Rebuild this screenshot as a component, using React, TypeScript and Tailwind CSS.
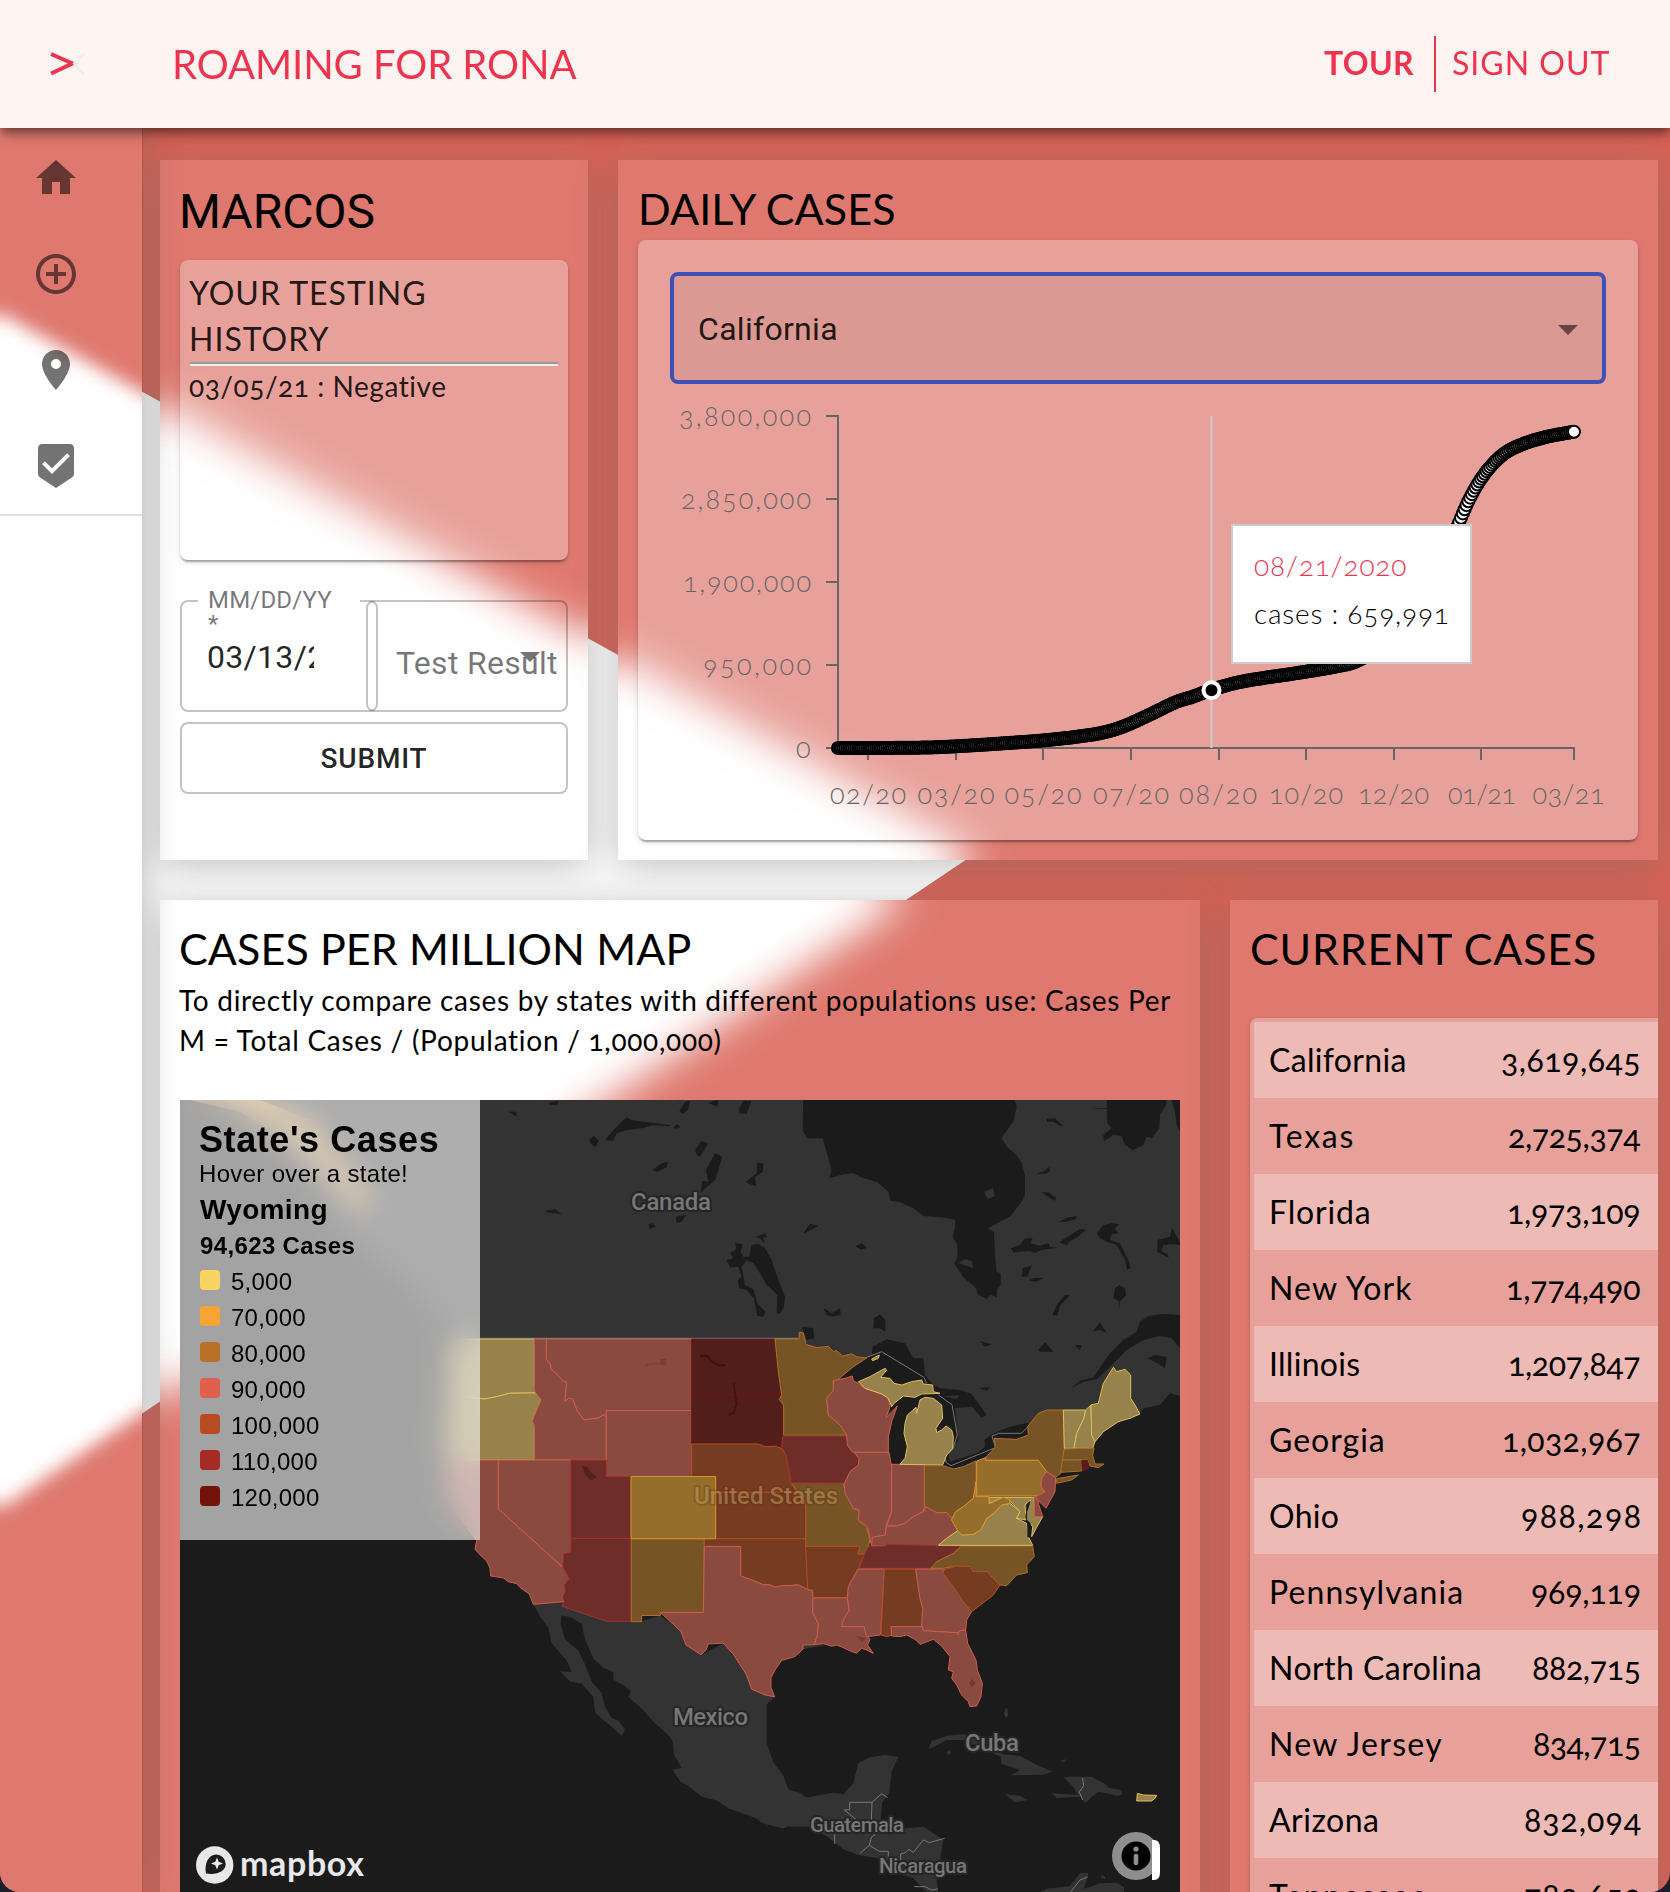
import { useLayoutEffect, useRef, useState, type ReactNode } from "react";
import { MdAddCircleOutline, MdArrowDropDown, MdBeenhere, MdHome, MdLocationOn } from "react-icons/md";

/* Text whose tracking is adjusted so that the line fills the given width. */
function Fit({ w, children, className = "" }: { w: number; children: string; className?: string }) {
  const ref = useRef<HTMLSpanElement>(null);
  const [spacing, setSpacing] = useState(0);
  useLayoutEffect(() => {
    if (ref.current && children.length > 1) {
      setSpacing((w - ref.current.offsetWidth) / (children.length - 1));
    }
  }, [w, children]);
  return (
    <span className={`block shrink-0 ${className}`} style={{ width: w }}>
      <span ref={ref} className="inline-block whitespace-pre" style={{ letterSpacing: spacing, marginRight: -spacing }}>
        {children}
      </span>
    </span>
  );
}

/* Frosted view of the page's white wedge, as seen through a translucent surface. */
function Frost({ id, box, wedge, blur }: { id: string; box: string; wedge: string; blur: number }) {
  return (
    <svg viewBox={box} className="absolute inset-0 -z-10 h-full w-full overflow-hidden" preserveAspectRatio="none">
      <defs>
        <filter id={id} filterUnits="userSpaceOnUse" x="-400" y="-100" width="2400" height="2300" colorInterpolationFilters="sRGB">
          <feGaussianBlur stdDeviation={blur} />
        </filter>
      </defs>
      <rect x="-400" y="-100" width="2400" height="2300" fill="#df796f" />
      <path d={wedge} fill="#fff" filter={`url(#${id})`} />
    </svg>
  );
}

function Panel({ className, frost, children }: { className: string; frost: ReactNode; children: ReactNode }) {
  return (
    <section className={`relative isolate p-5 shadow-[0_6px_36px_rgba(112,112,112,0.45)] ${className}`}>
      {frost}
      {children}
    </section>
  );
}

const paper =
  "rounded-lg bg-white/30 shadow-[0_4px_2px_-2px_rgba(0,0,0,0.2),0_2px_2px_rgba(0,0,0,0.14),0_2px_6px_rgba(0,0,0,0.12)]";

/* ---------- Daily cases chart ---------- */

const anchors: [number, number][] = [
  [838, 748], [868, 748], [928, 747.5], [956, 746.3], [1000, 743.6], [1043, 740.4], [1075, 737], [1101, 733],
  [1122, 727], [1149, 715], [1176, 702], [1192, 697], [1211, 690], [1240, 682], [1304, 672], [1336, 666.5],
  [1357, 661], [1400, 635], [1430, 592], [1458, 525], [1468, 502], [1479, 482], [1491, 466], [1505, 453],
  [1523, 444], [1546, 437], [1574, 431.7],
];

function curveAt(x: number) {
  let i = 0;
  while (i < anchors.length - 2 && anchors[i + 1][0] < x) i++;
  const slope = (k: number) => {
    const a = anchors[Math.max(0, k - 1)];
    const b = anchors[Math.min(anchors.length - 1, k + 1)];
    return (b[1] - a[1]) / (b[0] - a[0]);
  };
  const [x0, y0] = anchors[i];
  const [x1, y1] = anchors[i + 1];
  const h = x1 - x0;
  const t = (x - x0) / h;
  return (
    y0 * (2 * t ** 3 - 3 * t ** 2 + 1) +
    slope(i) * h * (t ** 3 - 2 * t ** 2 + t) +
    y1 * (-2 * t ** 3 + 3 * t ** 2) +
    slope(i + 1) * h * (t ** 3 - t ** 2)
  );
}

const days = Array.from({ length: 405 }, (_, i) => {
  const x = 838 + (736 * i) / 404;
  return [x, curveAt(x)];
});

const yTicks: [number, string, number][] = [
  [416, "3,800,000", 132], [499, "2,850,000", 130], [582, "1,900,000", 128], [665, "950,000", 108], [748, "0", 15],
];
const xTicks: [number, string, number, number][] = [
  [868, "02/20", 868, 76], [956, "03/20", 956, 77], [1043, "05/20", 1043, 77], [1131, "07/20", 1131, 76],
  [1219, "08/20", 1218, 78], [1306, "10/20", 1306, 74], [1394, "12/20", 1393.5, 71], [1481, "01/21", 1482, 68],
  [1574, "03/21", 1568.5, 72],
];

function CasesChart() {
  return (
    <svg viewBox="670 384 936 424" className="block h-[424px] w-[936px] overflow-visible">
      <g stroke="#666" strokeWidth="2" fill="none">
        <path d="M838 415V749M838 748H1575" />
        {yTicks.map(([y]) => <path key={y} d={`M826 ${y}H838`} />)}
        {xTicks.map(([x]) => <path key={x} d={`M${x} 748V760`} />)}
      </g>
      <g className="font-[Lato] text-[27px] font-light oldstyle-nums" fill="#666">
        {yTicks.map(([y, t, w]) => (
          <text key={t} x={811 - w} y={y + 10} textLength={w}>{t}</text>
        ))}
        {xTicks.map(([, t, c, w]) => (
          <text key={t} x={c - w / 2} y={804} textLength={w}>{t}</text>
        ))}
      </g>
      <path d="M1211.500 416V748" stroke="#ccc" strokeWidth="2" />
      <g stroke="#000" strokeWidth="2" fill="#fff">
        {days.map(([x, y], i) => <circle key={i} cx={x} cy={y} r="6" />)}
      </g>
      <circle cx="1211.500" cy="690.300" r="8" fill="#000" stroke="#fff" strokeWidth="4" />
    </svg>
  );
}

/* ---------- Map ---------- */

const tone = {
  y: ["#96824a", "#dfbf5b"],
  s: ["#8b4a40", "#cf5c4c"],
  r: ["#6e2d29", "#a5322c"],
  d: ["#521e1c", "#721512"],
  b: ["#775426", "#b06f2a"],
  o: ["#946e2a", "#d9932f"],
  u: ["#763c22", "#b44d22"],
};
type Shape = [keyof typeof tone, string];

const west: Shape[] = [
  ["y", "M-60 150L-50 128H193V250L197 268L118 269L85 277L45 284L20 282L-62 270Z"],
  ["y", "M-62 270L20 282L45 284L85 277L118 269L197 268L213 286L186 342L196 352L193 360V443H-65L-75 400Z"],
  ["s", "M-65 443H85V570L278 722L297 752L283 768L286 785L276 800L283 812L190 819L178 792L150 775L140 765L115 760L100 750L62 745L60 725L50 706L30 690L15 675L20 652L-60 560L-78 500Z"],
  ["s", "M193 128H229V180L242 195L242 206L262 220L280 238L290 240L288 260L285 290L296 282L308 283L322 315L342 338L385 333L402 324L409 333V443H193V352L186 342L213 286L197 268L193 262Z"],
  ["s", "M229 128H665V314H409V333L402 324L385 333L342 338L322 315L308 283L296 282L285 290L288 260L290 240L280 238L262 220L242 206L242 195L229 180Z"],
  ["s", "M409 314H665V486H409Z"],
  ["s", "M85 443H302V684L280 686L278 722L85 570Z"],
  ["d", "M665 128H913L922 180L926 220L935 255V273H665Z"],
  ["d", "M665 273H935L928 285L940 300V380L934 390L938 408L915 405L885 408L865 401L820 401H665Z"],
  ["r", "M302 443H409V486H483V647H302Z"],
  ["r", "M302 647H483V863H409L276 824L283 812L278 800L285 785L283 768L297 752L278 722L280 686L302 684Z"],
  ["b", "M484 648H703L701 840H571V848H515V864H484Z"],
  ["b", "M915 128H987L988 110L1000 112L1008 142L1040 150L1075 147L1090 160L1100 158L1118 172L1145 166L1160 174L1190 177L1150 200L1100 236L1090 238V262L1070 282L1074 325L1110 350L1130 378H941V300L928 285L935 273L926 220Z"],
  ["b", "M965 503L1118 501L1125 520L1150 570L1170 575L1165 600L1190 620L1200 650L1196 664L1185 688H1163L1170 668H1007V560L985 530Z"],
  ["u", "M665 401H865L885 408L915 407L935 413L948 430L955 460L963 500L975 520L985 527H737V486H665Z"],
  ["u", "M737 527H985L1003 555L1007 562V648H737Z"],
  ["u", "M703 648H1007V668L1013 695V780L985 768L960 770L940 770L915 774L900 768L880 768L860 760L812 745V668H703Z"],
  ["u", "M1007 668H1170L1163 688H1183L1165 725L1152 745L1138 765L1132 802H1028V783L1013 780Z"],
  ["r", "M938 381H1130L1135 408L1150 415L1168 440L1165 458L1140 475L1135 502L1120 503L963 503L955 460L948 430L935 410Z"],
  ["s", "M703 668H812V745L860 760L880 768L900 768L915 774L940 770L960 770L985 768L1013 781L1028 783V840L1045 870L1042 900L1033 924L998 925L1000 935L975 955L935 965L915 990L903 1010V1035L914 1060L885 1055L845 1040L828 1000L790 950L760 920L715 922L708 938L693 950L648 925L633 890L571 840H700Z"],
  ["s", "M1028 802H1132L1138 835L1115 876H1183L1190 900L1200 910L1193 925L1210 947L1190 938L1175 933L1160 946L1145 942L1115 930L1100 925L1085 928L1060 921L1033 924L1042 900L1045 870L1028 840Z"],
  ["o", "M483 486H737V648H483Z"],
];

const east: Shape[] = [
  ["s", "M130 272L165 265L187 258L190 272L205 280L225 295L275 312L295 325L300 350L288 383L322 348L305 395L295 440V487H188L172 465L170 435L150 405L115 375L110 325L130 302Z"],
  ["s", "M192 487H297L305 530V665L290 700L285 738L265 740L245 768L232 710L205 690L207 660L190 655L165 610L163 580L180 545L205 525L207 505Z"],
  ["s", "M305 523H403V650L400 665L370 680L345 700L320 708L290 708L305 665Z"],
  ["y", "M330 523L345 505L352 470L342 430L345 400L352 375L367 362L378 352L380 370L390 330L405 322L430 325L455 345L458 385L438 415L440 428L455 420L468 408L485 420L490 440L488 475L470 495L458 525Z"],
  ["y", "M205 275L240 260L285 235L290 240L272 262L300 265L312 280L335 285L365 275L395 270L400 282L428 285L430 305L450 310L395 312L375 322L340 318L312 340L305 350L295 325L275 312L225 295Z"],
  ["y", "M245 207L268 195L265 205L248 212Z"],
  ["b", "M403 527L460 527L490 537L520 530L558 513V590L550 625L520 650L497 665L485 685L470 668L440 668L403 650Z"],
  ["s", "M290 708L320 708L345 700L370 680L400 665L408 650L440 668L470 668L485 685L503 722L470 745L445 766L245 768L247 742L285 735Z"],
  ["r", "M235 770L288 768V763L515 768L490 790L440 815L422 835H208L222 795Z"],
  ["s", "M205 837H283L272 1035L230 1040L222 1010H155L160 990L178 960L172 925L175 890Z"],
  ["u", "M283 837H377L390 925L398 955L395 1010H303L308 1035L290 1040L273 1035Z"],
  ["s", "M377 837H465L458 845L500 905L520 935L545 965L530 990L527 1020L500 1028L400 1022L395 1010L398 955L390 925Z"],
  ["s", "M303 1010H397L400 1022L500 1028L505 1035L508 1022L527 1020L533 1060L558 1110L562 1140L577 1180L573 1220L560 1248L540 1250L535 1235L515 1215L500 1185L485 1165L490 1145L475 1140L480 1100L455 1068L430 1048L390 1063L378 1050L350 1035L330 1040L305 1038Z"],
  ["b", "M515 768H728L733 800L710 825L712 848L680 855L650 887L630 885L590 845H550L540 832L500 828L458 835H422L440 815L490 790Z"],
  ["u", "M458 848L465 838L500 828L540 830L550 845H590L630 885L610 915L545 965L520 935L500 905Z"],
  ["y", "M445 766L470 745L503 722L515 735L550 733L572 720L590 685L610 670L635 645L660 640L690 665L680 685L710 700L715 740L728 766Z"],
  ["y", "M597 622H732L735 680H758L740 712L725 740L728 710L712 690V650L722 630L705 645L708 690L680 685L690 665L655 628L640 622L597 640Z"],
  ["o", "M558 575V620H597V642L640 622L658 628L660 640L635 645L610 670L590 685L572 720L550 733L515 735L503 722L485 690L497 665L520 650L550 625Z"],
  ["s", "M733 620L742 625L750 655L758 680H733Z"],
  ["b", "M587 503L617 470L612 445L680 448L715 435L713 410L745 370L770 360H820L823 475L820 507L812 550L797 562L770 545L745 511H587Z"],
  ["b", "M800 566L835 560L865 555L845 570L800 580Z"],
  ["o", "M560 513L587 503V511H745L770 545L755 565L753 590L765 605L750 618H560Z"],
  ["s", "M770 545L797 562L795 605L768 655L735 622L765 605L753 590L755 565Z"],
  ["y", "M820 360H887L882 385L860 430L852 475H823Z"],
  ["y", "M887 360L903 345L905 435L915 455L908 475H852L860 430L882 385Z"],
  ["y", "M903 345L925 340L940 280L970 232L980 245L1005 238L1022 255V325L1035 345L1050 372L1020 385L985 395L940 425L915 455L905 435Z"],
  ["b", "M823 477L912 474L908 495L915 522L942 522L925 533L900 528L893 510H817Z"],
  ["b", "M817 510H875V543L812 547Z"],
  ["d", "M875 512H893L897 535L877 543Z"],
];

function States({ shapes }: { shapes: Shape[] }) {
  return (
    <>
      {shapes.map(([t, d], i) => (
        <path key={i} d={d} fill={tone[t][0]} stroke={tone[t][1]} strokeWidth="1" vectorEffect="non-scaling-stroke" strokeLinejoin="round" />
      ))}
    </>
  );
}

const WATER = "#1b1b1b";
const LAND = "#333333";
const G6 = "translate(470 1090) scale(0.33333)";
const G7 = "translate(790 1290) scale(0.33333)";
const G8 = "translate(470 1290) scale(0.33333 0.38385)";
const G9 = "translate(790 1640) scale(0.33333)";
const G11 = "translate(800 1095) scale(0.33333)";

function CasesMap() {
  return (
    <svg viewBox="180 1100 1000 792" className="block h-[792px] w-[1000px]">
      <rect x="180" y="1100" width="1000" height="792" fill={WATER} />
      <path fill={LAND} d="M225 1100H1180V1405L1158 1407L1140 1412L1100 1430L1040 1480L1000 1560L960 1610L900 1630L800 1650L560 1560L475 1510L450 1430L455 1335L440 1320L400 1275L350 1240L310 1180L260 1130Z" />
      <path fill="#e0a04c" fillOpacity="0.75" d="M190 1100H260L310 1120L340 1160L375 1200L360 1212L325 1175L290 1140L240 1112Z" />

      <g transform={G8} fill={LAND}>
        <path d="M190 819L283 812L409 863H515L571 848L633 890L693 950L760 920L830 1000L914 1060L890 1080V1180L910 1230L940 1265L955 1300L1010 1322L1090 1310L1130 1315L1200 1322V1474L1170 1470L1120 1455L1080 1430L1060 1410L1030 1388L985 1388L940 1403L880 1390L855 1375L775 1350L740 1330L695 1320L660 1295L630 1280L608 1250L635 1245L612 1210L608 1175L595 1160L550 1125L520 1095L475 1060L482 1045L465 1032L430 1015V995L400 985L370 960L355 930L345 910L335 870L300 852L275 848L272 870L285 910L325 940L345 975L365 1020L395 1050L405 1085L425 1115L445 1122L465 1145L455 1162L435 1145L400 1120L375 1100L370 1060L335 1025L300 1020L270 993L305 995L290 965L245 920L235 880L210 850Z" />
      </g>
      <g transform={G9}>
        <g fill={LAND}>
          <path d="M0 450L30 458L50 475L110 465L160 463L190 430L205 370L240 352L285 345L325 350L305 395L298 460L277 485L272 540L290 572L350 565L400 560L430 580L460 600L450 660L438 700L445 756H410L370 715L340 705L300 675L265 655L205 645L160 628L120 595L60 560L0 560Z" />
          <path d="M415 328L425 303L470 288L522 282L560 300L640 343L690 348L735 372L787 395L760 404L663 406L690 390L635 372L632 350L520 300L470 300L430 322Z" />
          <path d="M470 335L480 332L482 342L472 344ZM808 363L828 358L822 366ZM645 463L690 467L712 480L675 487Z" />
          <path d="M820 412L850 410L905 410L950 435L952 442L990 450L998 462L985 468L925 455L900 475L888 490L870 470L800 474L785 460L865 465L845 435Z" />
          <path d="M750 756L770 746L840 738L870 700L895 698L890 722L880 748L930 730L980 728L1002 742V756ZM934 705L945 710L946 717L934 715ZM645 205L652 205L655 225L648 235L642 222Z" />
        </g>
        <path d="M293 473L275 461L246 487H179V509L163 510L200 540M246 487L244 540M256 583L244 592L238 616L210 640M238 616L268 634H295V655M134 583V612M332 660V642L346 638L357 628L370 637L400 600L418 608L464 595M372 740H405L425 750L443 747M878 414L881 437L868 456L878 480M842 756L870 720L893 711" fill="none" stroke="#777" strokeWidth="3" />
        <States shapes={[["y", "M1042 460L1060 465L1100 466L1095 475L1085 483H1040Z"]]} />
      </g>

      <g transform={G11} fill={WATER}>
        <path d="M10 0H640L650 35L640 80L605 128L620 155L650 180L665 205L675 240V300L665 320L630 365L562 400L582 410L585 480L590 530L602 535V570L590 585V610L575 590L562 592L560 610L535 600L525 575L492 550L462 503L472 490V450L458 425L465 400V375L440 368L370 363L340 340L300 322L272 317L265 290L230 260L185 248L160 234L130 238L88 250L95 225L85 190L68 130L22 130L8 108Z" />
        <path d="M920 0H1100L1098 30L1080 60L1078 100L1055 130L1040 125L1030 150L998 166L975 150L965 122L940 120L912 138L910 120L935 100L922 85Z" />
        <path d="M1110 0H1140V110L1130 90L1125 50Z" />
        <path d="M875 33L890 40H920V42H890ZM740 72L765 70L790 92L778 92L762 80L742 80ZM706 238L728 230L748 216L750 228L738 236ZM725 292L745 292L770 308L765 317L748 308ZM776 382L800 368L830 363L828 372L800 380Z" />
        <path d="M632 460L660 450L675 430L698 430L692 445L720 452L745 444L750 456L772 458L722 466L705 474L690 468L660 470L642 473ZM778 442L795 430L840 402L858 404L830 428L808 440L800 452Z" />
        <path d="M890 415L910 390L935 385L958 388L945 400L955 415L935 418L930 435L960 445L985 495L992 520L982 525L975 495L950 450L920 440L900 430ZM1072 435L1110 425L1115 398L1140 440V450L1115 448L1090 450L1085 468L1105 480V488L1072 470Z" />
        <path d="M668 520L695 512L682 545L665 545ZM686 555L705 548L732 550L705 560ZM757 660L770 630L795 600L810 600L780 632L772 662ZM945 580L958 570L975 580L978 600L960 620V640L957 618L940 610ZM878 710L900 682L920 715L900 705Z" />
        <path d="M10 416L30 388L56 392L38 402ZM168 455L185 445L200 458L185 464ZM70 638L95 655L120 640L122 660L95 665L80 660ZM222 670L240 658L256 675V710L240 700L220 700ZM5 695L40 700L42 730L20 735ZM540 738L575 748L555 755ZM715 765L735 742L760 770L720 770ZM825 750L845 750L840 765Z" />
      </g>
      <path d="M984 1192L993 1188L995 1196L988 1199ZM958 1263L965 1259L972 1261L973 1268Z" fill={LAND} />

      <g transform={G6} fill={WATER}>
        <path d="M405 150L435 115L455 95L470 82L485 90L545 98L600 106L600 109L545 106L520 114L470 120L440 130L430 152ZM357 150L372 137L386 152L376 172L362 160ZM115 65L138 65L140 80ZM235 38L265 33L262 44L240 44ZM608 112L622 103L632 112L620 116Z" />
        <path d="M628 65L645 35L660 32L655 58L640 72ZM712 38L745 30L742 50L728 44ZM808 55L820 32L844 34L830 72L808 70ZM676 178L695 153L715 160L690 200L680 195ZM708 240L735 190L757 200L745 240L735 270L700 300L692 310L696 272L715 275ZM547 240L575 220L594 215L590 232L560 246Z" />
        <path d="M828 275L860 250L862 218L880 220L878 245L855 262L858 288L832 280ZM225 363L255 357L275 373L235 368ZM617 380L650 374L635 395L620 398ZM535 405L546 398L557 410L540 416ZM1000 430L1020 402L1045 408L1018 418ZM1158 468L1175 460L1190 472L1178 478Z" />
        <path d="M770 510L790 505L780 488L800 478L795 460L818 462L812 485L820 500L838 500L845 465L865 462L885 475L905 510L925 570L945 620L942 650L930 672L920 670L922 615L908 600L890 585L870 550L850 520L830 510L815 530L825 585L850 598L862 640L886 665L880 680L862 678L852 625L830 600L808 595L803 570L815 560L805 530L780 532ZM857 440L885 430L892 440L880 445L885 460L872 448Z" />
      </g>

      <g transform={G7} fill={WATER}>
        <path d="M145 268L190 225L245 195L248 170L290 148L345 160L370 205H400L405 255L430 285L450 295L510 300L545 312L590 375L575 383L545 350L495 355L505 450L475 490L480 515L560 490L585 470L583 450L610 430L660 410L715 398V440L617 475L560 520L490 545L455 530L330 523L320 527L298 520L292 440L300 350L220 290Z" />
        <path d="M843 295L870 272L910 262L935 225L960 190L1000 150L1040 125L1050 95L1075 78L1120 72L1170 75V175L1145 145L1110 138L1060 150L1010 180L960 230L920 268L880 275ZM1060 355L1110 345L1140 310L1170 318V345L1110 375L1085 400L1080 420L1100 432L1130 410L1170 390V440H900L1050 372ZM1072 205L1095 195L1130 200L1125 235L1095 215Z" />
        <path d="M558 5L620 0L618 20L600 15L590 28ZM565 293L600 292L590 302Z" />
        <path d="M460 318L510 316L500 328Z" fill={LAND} />
      </g>
      <g transform={G7} fill="none">
        <path d="M228 203L275 185L402 262L410 280M445 315L486 344L502 435L488 478L466 500L468 517L483 527L616 473L606 438L626 430H694L716 408" stroke="#777" strokeWidth="3" />
      </g>
      <path d="M480 1338.500H798" fill="none" stroke="#777" strokeWidth="1.500" />

      <g transform={G8}><States shapes={west} /></g>
      <g transform={G7}><States shapes={east} /></g>

      <g transform={G7} fill={WATER}>
        <path d="M712 640L722 632L712 665V690L722 700V745L712 740V700L706 680ZM745 640L768 658L758 660Z" />
      </g>
      <g transform={G8} fill="none">
        <path d="M335 458L352 462L360 472L380 488L362 497L345 480Z" fill="#561f1f" />
        <path d="M522 202L530 192L570 190L572 180L588 180L586 198L565 192L530 196Z" fill="#7c3d35" />
        <path d="M690 172L712 172L725 186L745 196L766 196M792 242L796 280L800 295L792 320L775 326" stroke="#3f1312" strokeWidth="6" />
      </g>
      <path d="M972 1679L976 1683L972 1687L969 1683ZM856 1636L866 1638L862 1642Z" fill="#733832" />

      <g fill="#777" stroke="#252525" strokeWidth="4" strokeLinejoin="round" className="font-[Roboto] text-[24px] font-medium [paint-order:stroke]">
        <text x="631" y="1210" textLength="80">Canada</text>
        <text x="673" y="1725" textLength="75">Mexico</text>
        <text x="965" y="1751" textLength="54">Cuba</text>
        <text x="694" y="1504" textLength="144" fill="#d9b26f" fillOpacity="0.45" stroke="#5a2c18" strokeOpacity="0.25">United States</text>
        <g className="text-[21px]">
          <text x="810" y="1832" textLength="94">Guatemala</text>
          <text x="879" y="1873" textLength="88">Nicaragua</text>
        </g>
      </g>

      <circle cx="214.7" cy="1865" r="18.7" fill="#e8e8e8" />
      <path d="M206 1873.500C204 1863 209 1854.500 216 1854.500A9.500 9.500 0 0 1 225.700 1864C225.700 1871 217 1875.500 206 1873.500Z" fill={WATER} />
      <path d="M217 1857.500L218.700 1861.800L223 1863.500L218.700 1865.200L217 1869.500L215.300 1865.200L211 1863.500L215.300 1861.800Z" fill="#e8e8e8" />
      <text x="240" y="1876" textLength="124" className="font-[Lato] text-[34px] font-bold" fill="#e8e8e8">mapbox</text>

      <circle cx="1136" cy="1856" r="24" fill="#8f8f8f" />
      <path d="M1152 1840H1154Q1160 1840 1160 1848V1872Q1160 1880 1154 1880H1152Z" fill="#fff" />
      <circle cx="1136" cy="1856" r="14.500" fill="#000" />
      <circle cx="1136" cy="1849" r="2.600" fill="#8f8f8f" />
      <path d="M1136 1856V1863" stroke="#8f8f8f" strokeWidth="4.600" strokeLinecap="round" />
    </svg>
  );
}

const legend: [string, string][] = [
  ["bg-[#f9d463]", "5,000"],
  ["bg-[#f7a336]", "70,000"],
  ["bg-[#bb7027]", "80,000"],
  ["bg-[#e0604d]", "90,000"],
  ["bg-[#b84b1f]", "100,000"],
  ["bg-[#a82b26]", "110,000"],
  ["bg-[#74130c]", "120,000"],
];

const cases: [string, number, string, number][] = [
  ["California", 137, "3,619,645", 140],
  ["Texas", 84, "2,725,374", 133],
  ["Florida", 102, "1,973,109", 134],
  ["New York", 143, "1,774,490", 135],
  ["Illinois", 91, "1,207,847", 133],
  ["Georgia", 116, "1,032,967", 139],
  ["Ohio", 70, "988,298", 120],
  ["Pennsylvania", 194, "969,119", 110],
  ["North Carolina", 213, "882,715", 109],
  ["New Jersey", 173, "834,715", 108],
  ["Arizona", 110, "832,094", 117],
  ["Tennessee", 158, "789,652", 117],
];

const heading = "mb-[3px] -ml-px h-[57px] font-[Lato] text-[43px] leading-[57px]";

export default function App() {
  return (
    <div className="h-[1892px] w-[1670px] bg-[#1c1c2a]">
      <div className="relative h-full overflow-hidden rounded-b-[20px] bg-[#d86255] font-[Lato] text-black oldstyle-nums">
        <svg viewBox="0 0 1670 1892" className="absolute inset-0 h-full w-full">
          <path d="M0 313L976 853L0 1509Z" fill="#fff" />
        </svg>

        <header className="relative z-10 flex h-32 items-center bg-[#fdf3f1] pr-[61px] text-[#ee334e] shadow-[0_4px_8px_-2px_rgba(0,0,0,0.35),0_8px_10px_rgba(0,0,0,0.2),0_2px_20px_rgba(0,0,0,0.16)]">
          <div className="flex h-full w-[143px] items-center bg-[#fef5f3] pl-12">
            <svg viewBox="0 0 40 28" className="h-7 w-10" fill="none">
              <path d="M3 4L24.500 13.500L3 23.500" stroke="#ee334e" strokeWidth="4" />
              <path d="M36 3L26.500 13.500L36 25" stroke="#f2efee" strokeWidth="3" />
            </svg>
          </div>
          <h1 className="grow pl-[29px] text-[40px] leading-none">
            <Fit w={405}>ROAMING FOR RONA</Fit>
          </h1>
          <Fit w={90} className="pb-[3px] text-[32px] leading-none font-bold">TOUR</Fit>
          <div className="mr-4 ml-5 h-14 w-0.5 bg-[#ee334e]" />
          <Fit w={157} className="pb-[3px] text-[32px] leading-none">SIGN OUT</Fit>
        </header>

        <div className="relative flex h-[1764px]">
          <nav className="relative isolate z-[1] w-[143px] shrink-0 border-r border-black/15 text-black/55 shadow-[0_0_34px_rgba(100,100,100,0.45)]">
            <Frost id="frost-nav" box="0 128 143 1764" wedge="M-143 392L0 313L976 853L0 1509L-143 1413Z" blur={9} />
            <ul className="flex h-[388px] flex-col gap-12 border-b-2 border-black/12 pt-[26px] pl-8">
              <li><MdHome size={48} /></li>
              <li><MdAddCircleOutline size={48} /></li>
              <li><MdLocationOn size={48} /></li>
              <li><MdBeenhere size={48} /></li>
            </ul>
          </nav>

          <main className="flex flex-col gap-10 pt-8 pl-[17px]">
            <div className="flex gap-[30px]">
              <Panel
                className="h-[700px] w-[428px]"
                frost={<Frost id="frost-user" box="160 160 428 700" wedge="M0 490L160 401.500L588 638.300L748 550V1250H0Z" blur={20} />}
              >
                <h2 className="mb-4 -ml-px h-16 font-[Roboto] text-[48px] leading-[64px]">MARCOS</h2>
                <div className={`h-[300px] px-2.5 pt-2.5 text-black/87 ${paper}`}>
                  <h3 className="-ml-px text-[32px] leading-[46px]">
                    <Fit w={237}>YOUR TESTING</Fit>
                    <Fit w={139}>HISTORY</Fit>
                  </h3>
                  <hr className="h-1 border-t-2 border-b-2 border-t-[#989898] border-b-[#eeeeee]" />
                  <p className="-ml-px text-[28px] leading-10"><Fit w={257}>03/05/21 : Negative</Fit></p>
                </div>
                <div className="mt-10 flex font-[Roboto] lining-nums">
                  <div className="relative h-28 w-[198px]">
                    <fieldset className="absolute inset-0 rounded-lg border-2 border-black/23">
                      <legend className="ml-4 h-0.5 w-[162px]" />
                    </fieldset>
                    <div className="-mt-3 ml-7 w-[130px] text-[24px] leading-6 tracking-[0.2px] text-black/54">MM/DD/YY *</div>
                    <div className="mt-0.5 ml-[27px] w-[107px] overflow-hidden text-[32px] leading-[38px] tracking-[0.3px] whitespace-nowrap text-black/87">03/13/21</div>
                  </div>
                  <div className="relative -ml-3 h-28 w-[202px] rounded-lg border-2 border-black/23 text-black/54">
                    <div className="pt-11 pl-7 text-[32px] leading-[34px] tracking-[0.3px] whitespace-nowrap">Test Result</div>
                    <MdArrowDropDown size={48} className="absolute top-[30px] right-3" />
                  </div>
                </div>
                <button className="mt-2.5 h-[72px] w-full rounded-lg border-2 border-black/23 pt-0.5 font-[Roboto] text-[28px] font-medium tracking-[0.8px] text-black/87">
                  SUBMIT
                </button>
              </Panel>

              <Panel
                className="h-[700px] w-[1040px]"
                frost={<Frost id="frost-daily" box="618 160 1040 700" wedge="M418 765L618 655L976 853L964 860L976 867L618 1065L418 955Z" blur={20} />}
              >
                <h2 className={heading}><Fit w={258} className="pl-px">DAILY CASES</Fit></h2>
                <div className={`relative h-[600px] p-8 ${paper}`}>
                  <div className="flex h-28 items-center justify-between rounded-lg border-4 border-[#3f51b5] bg-black/5 pt-px pr-2.5 pl-6 font-[Roboto] text-[32px] tracking-[0.3px] text-black/87">
                    California
                    <MdArrowDropDown size={48} className="text-black/54" />
                  </div>
                  <CasesChart />
                  <div className="absolute top-[284px] left-[593px] h-[140px] w-[241px] border-2 border-[#ccc] bg-white pt-[15px] pl-[21px] text-[28px] leading-[48px] font-light">
                    <Fit w={152} className="text-[#ee334e]">08/21/2020</Fit>
                    <Fit w={195}>cases : 659,991</Fit>
                  </div>
                </div>
              </Panel>
            </div>

            <div className="flex gap-[30px]">
              <Panel
                className="h-[1040px] w-[1040px]"
                frost={<Frost id="frost-map" box="160 900 1040 1040" wedge="M0 1294.500L160 1401.500L906 900L160 398.500L0 506Z" blur={20} />}
              >
                <h2 className={heading}><Fit w={512}>CASES PER MILLION MAP</Fit></h2>
                <p className="-ml-px text-[28px] leading-10">
                  <Fit w={991}>To directly compare cases by states with different populations use: Cases Per</Fit>
                  <Fit w={543}>M = Total Cases / (Population / 1,000,000)</Fit>
                </p>
                <div className="relative mt-10 h-[792px] overflow-hidden">
                  <CasesMap />
                  <div className="absolute top-0 left-0 h-[440px] w-[300px] bg-white/60 pt-[19px] pr-5 pl-[19px] font-['Liberation_Sans'] text-[24px] lining-nums backdrop-blur-[14px]">
                    <Fit w={240} className="text-[36px] leading-[42px] font-bold">State's Cases</Fit>
                    <Fit w={209} className="text-[24px] leading-[26px]">Hover over a state!</Fit>
                    <Fit w={127} className="mt-[5px] ml-px text-[28px] leading-[36px] font-bold">Wyoming</Fit>
                    <Fit w={155} className="mt-px ml-px text-[24px] leading-[34px] font-bold">94,623 Cases</Fit>
                    <ul className="mt-[5px] ml-px">
                      {legend.map(([color, label]) => (
                        <li key={label} className="flex h-9 items-start">
                          <span className={`mt-0.5 mr-[11px] size-5 rounded ${color}`} />
                          <span className="leading-[28px] tracking-[0.25px]">{label}</span>
                        </li>
                      ))}
                    </ul>
                  </div>
                </div>
              </Panel>

              <Panel
                className="h-[1040px] w-[428px] overflow-hidden pr-0"
                frost={<Frost id="frost-current" box="1230 900 428 1040" wedge="" blur={20} />}
              >
                <h2 className={heading}><Fit w={346} className="pl-px">CURRENT CASES</Fit></h2>
                <div className={`mt-[41px] h-[1000px] pt-1 pl-1 ${paper} rounded-tr-none`}>
                  {cases.map(([name, nameWidth, count, countWidth]) => (
                    <div key={name} className="flex h-[76px] items-start justify-between pr-[17px] pl-[15px] text-[32px] leading-[75px] odd:bg-white/27">
                      <Fit w={nameWidth}>{name}</Fit>
                      <Fit w={countWidth}>{count}</Fit>
                    </div>
                  ))}
                </div>
              </Panel>
            </div>
          </main>
        </div>
      </div>
    </div>
  );
}
